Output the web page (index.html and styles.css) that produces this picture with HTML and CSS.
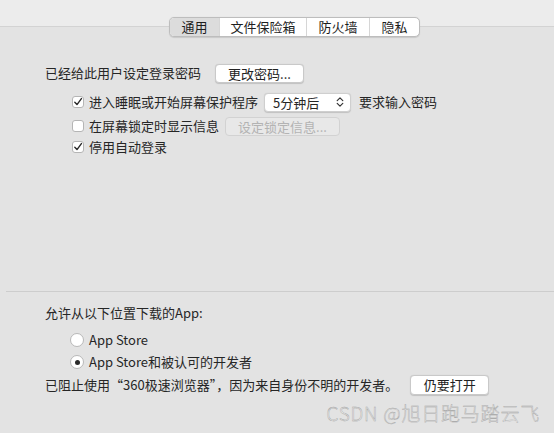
FILE: index.html
```html
<!DOCTYPE html>
<html lang="zh-CN">
<head>
<meta charset="utf-8">
<link rel="stylesheet" href="styles.css">
</head>
<body>
<div class="header"></div>
<div class="tabs">
  <div class="tab tab-sel" style="width:49px">通用</div>
  <div class="tab" style="width:86px">文件保险箱</div>
  <div class="tab" style="width:62px">防火墙</div>
  <div class="tab tab-last" style="width:49px">隐私</div>
</div>

<div class="section">
  <div class="row row1">
    <span class="label">已经给此用户设定登录密码</span>
    <span class="btn btn-pass">更改密码...</span>
  </div>
  <div class="row row2 indent">
    <span class="check on"><svg viewBox="0 0 12 12" width="12" height="12"><path d="M2.8 6.3 L5 8.6 L9.4 2.6" fill="none" stroke="#2a2a2a" stroke-width="1.4" stroke-linecap="round" stroke-linejoin="round"/></svg></span>
    <span class="label">进入睡眠或开始屏幕保护程序</span>
    <span class="popup"><span class="popup-text">5分钟后</span><svg class="chev" viewBox="0 0 8 12" width="8" height="12"><path d="M1.2 4.6 L4 1.8 L6.8 4.6 M1.2 7.4 L4 10.2 L6.8 7.4" fill="none" stroke="#333" stroke-width="1.2" stroke-linecap="round" stroke-linejoin="round"/></svg></span>
    <span class="label">要求输入密码</span>
  </div>
  <div class="row row3 indent">
    <span class="check"></span>
    <span class="label">在屏幕锁定时显示信息</span>
    <span class="btn btn-dis">设定锁定信息...</span>
  </div>
  <div class="row row4 indent">
    <span class="check on"><svg viewBox="0 0 12 12" width="12" height="12"><path d="M2.8 6.3 L5 8.6 L9.4 2.6" fill="none" stroke="#2a2a2a" stroke-width="1.4" stroke-linecap="round" stroke-linejoin="round"/></svg></span>
    <span class="label">停用自动登录</span>
  </div>
</div>

<div class="divider"></div>

<div class="section">
  <div class="row row-title">
    <span class="label">允许从以下位置下载的App:</span>
  </div>
  <div class="row row-radio1 indent-r">
    <span class="radio"></span>
    <span class="label">App Store</span>
  </div>
  <div class="row row-radio2 indent-r">
    <span class="radio on"><span class="dot"></span></span>
    <span class="label">App Store和被认可的开发者</span>
  </div>
  <div class="row row-block">
    <span class="label">已阻止使用“360极速浏览器”，因为来自身份不明的开发者。</span>
    <span class="btn btn-open">仍要打开</span>
  </div>
</div>

<div class="watermark">CSDN @旭日跑马踏云飞</div>
</body>
</html>
```

FILE: styles.css
```css
html, body {
  margin: 0;
  padding: 0;
}
body {
  width: 554px;
  height: 433px;
  overflow: hidden;
  background: #e3e3e3;
  font-family: "Noto Sans CJK SC", "Noto Sans", sans-serif;
  font-size: 13px;
  color: #262626;
  position: relative;
}
.header {
  height: 26px;
  background: #ececec;
  border-bottom: 1px solid #d3d3d3;
}
.tabs {
  display: flex;
  margin-top: -10px;
  margin-left: 169px;
  width: max-content;
  height: 18px;
  border: 1px solid #bdbdbd;
  border-radius: 5px;
  background: #fff;
  overflow: hidden;
  box-shadow: 0 0.5px 1px rgba(0,0,0,0.12);
}
.tab {
  display: flex;
  align-items: center;
  justify-content: center;
  border-right: 1px solid #d6d6d6;
  font-size: 13px;
  line-height: 18px;
  color: #1e1e1e;
}
.tab-last { border-right: none; }
.tab-sel { background: #dcdcdc; }

.section {
  display: flex;
  flex-direction: column;
  padding-left: 45px;
}
.row {
  display: flex;
  align-items: center;
  height: 20px;
}
.label {
  line-height: 20px;
  white-space: nowrap;
}
.row1 { margin-top: 26px; }
.row2 { margin-top: 9px; }
.row3 { margin-top: 4px; }
.row4 { height: 22px; }
.indent { padding-left: 27px; }
.indent-r { padding-left: 25px; }

.btn {
  display: flex;
  align-items: center;
  justify-content: center;
  box-sizing: border-box;
  height: 19px;
  background: #fff;
  border: 1px solid #c9c9c9;
  border-radius: 4px;
  box-shadow: 0 0.5px 1px rgba(0,0,0,0.15);
  font-size: 13px;
  color: #222;
}
.btn-pass { width: 89px; margin-left: 14px; }
.btn-dis {
  width: 115px;
  margin-left: 6px;
  background: #e8e8e8;
  border-color: #d2d2d2;
  box-shadow: none;
  color: #b3b3b3;
}
.btn-open { width: 79px; margin-left: 12px; height: 20px; }

.check {
  box-sizing: border-box;
  width: 12px;
  height: 12px;
  background: #fff;
  border: 1px solid #b5b5b5;
  border-radius: 3px;
  margin-right: 5px;
  position: relative;
  display: flex;
}
.check svg {
  position: absolute;
  left: -1px;
  top: -1px;
}
.popup {
  display: flex;
  align-items: center;
  box-sizing: border-box;
  width: 87px;
  height: 19px;
  margin: 0 8px 0 6px;
  padding: 0 6px 0 8px;
  background: #fff;
  border: 1px solid #cfcfcf;
  border-radius: 4px;
  box-shadow: 0 0.5px 1px rgba(0,0,0,0.15);
}
.popup-text { flex: 1; line-height: 17px; }
.chev { display: block; }

.divider {
  margin-top: 133px;
  margin-left: 6px;
  height: 1px;
  background: #cdcdcd;
}
.row-title { margin-top: 11px; }
.row-radio1 { margin-top: 7px; }
.row-radio2 { margin-top: 2px; }
.row-block { margin-top: 2px; height: 21px; }

.radio {
  box-sizing: border-box;
  width: 14px;
  height: 14px;
  border-radius: 50%;
  background: #fff;
  border: 1px solid #b8b8b8;
  margin-right: 5px;
  display: flex;
  align-items: center;
  justify-content: center;
}
.dot {
  width: 5px;
  height: 5px;
  border-radius: 50%;
  background: #2a2a2a;
}
.watermark {
  position: absolute;
  right: 14px;
  top: 400px;
  font-size: 19px;
  line-height: 26px;
  font-weight: 300;
  color: #f2f2f2;
  -webkit-text-stroke: 0.4px #a0a0a0;
  letter-spacing: 0.8px;
}
```
